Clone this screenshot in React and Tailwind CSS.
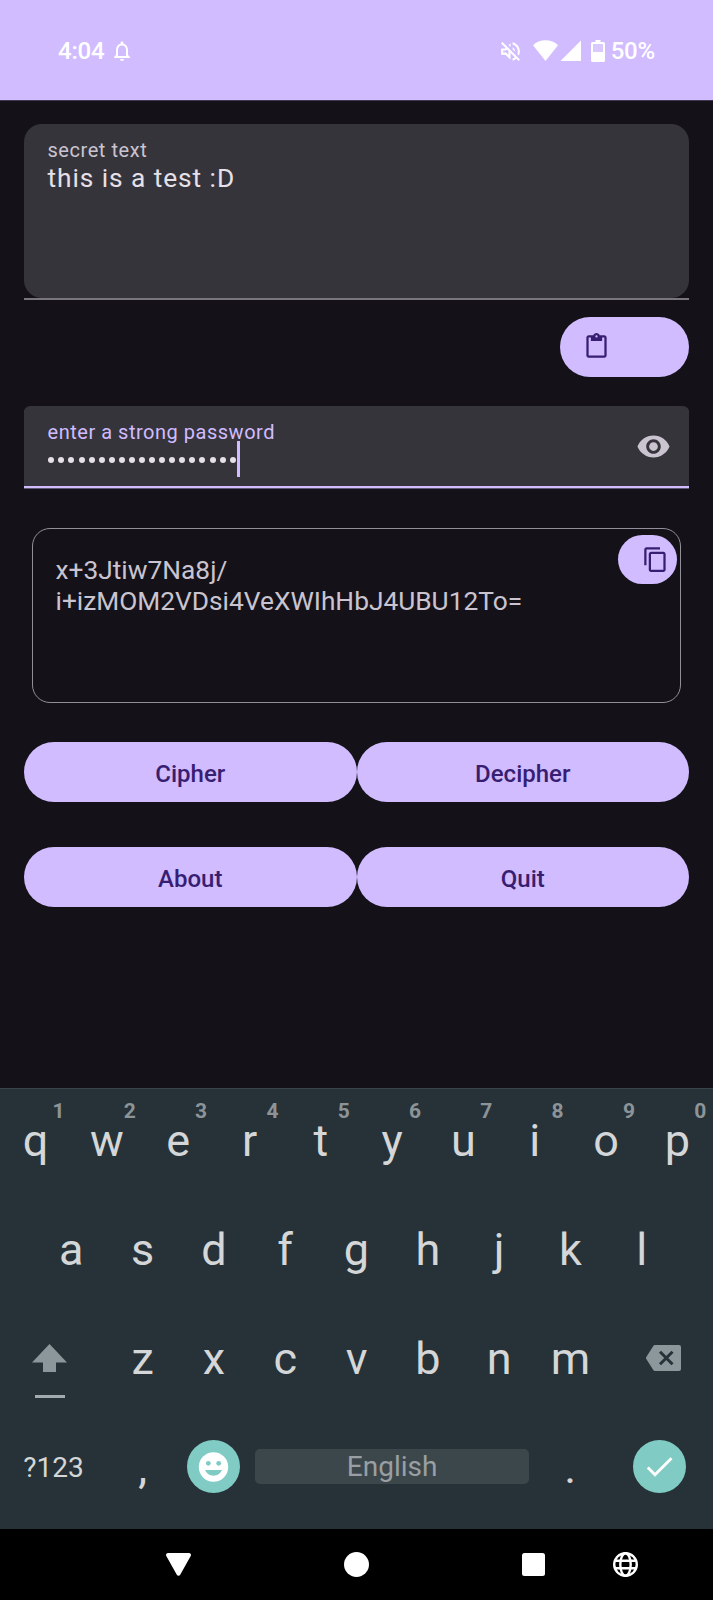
import React from "react";
import {
  MdNotificationsNone,
  MdOutlineVolumeOff,
  MdContentPaste,
  MdContentCopy,
  MdVisibility,
} from "react-icons/md";

function StatusBar() {
  return (
    <header className="flex h-[101px] items-center justify-between border-b border-[#40394f] bg-[#d0bcff] pt-[2px] pr-[58px] pl-[58px] text-white">
      <div className="flex items-center">
        <span className="text-[24px] leading-[28px] font-medium tracking-[-0.2px]">4:04</span>
        <MdNotificationsNone className="ml-[6px] size-[24px]" />
      </div>
      <div className="flex items-center">
        <MdOutlineVolumeOff className="mr-[10px] size-[25px]" />
        <svg className="mb-[1px] h-[22px] w-[48px]" viewBox="0 0 48 22" fill="currentColor">
          <path d="M0 5.2C3.2 2 7.500 .3 12.500 .3S21.800 2 25 5.200L12.500 21z" />
          <path d="M48 .5V21H27.500z" />
        </svg>
        <svg className="ml-[10px] h-[22px] w-[14px]" viewBox="0 0 14 22" fill="currentColor">
          <path d="M4.500 0h5v2H12.500a1.500 1.500 0 0 1 1.500 1.500v17a1.500 1.500 0 0 1-1.500 1.500H1.500A1.500 1.500 0 0 1 0 20.500v-17a1.500 1.500 0 0 1 1.500-1.500h3z" />
          <path d="M2 4h10v8H2z" fill="#dac9ff" />
        </svg>
        <span className="ml-[5.5px] text-[24px] leading-[28px] font-medium tracking-[-0.2px]">50%</span>
      </div>
    </header>
  );
}

function PillButton({ label }) {
  return (
    <button className="h-[60px] flex-1 rounded-full bg-[#d0bcff] pt-[4px] text-[24px] leading-[28px] font-medium text-[#381e72]">
      {label}
    </button>
  );
}

function Dots() {
  return (
    <div className="mt-[12.5px] ml-[0.8px] flex h-[6px] gap-[4.09px]">
      {Array.from({ length: 19 }, (_, i) => (
        <span key={i} className="size-[6px] rounded-full bg-[#e6e0e9]" />
      ))}
    </div>
  );
}

function Key({ children, hint }) {
  return (
    <div className="relative flex w-[71.3px] items-center justify-center text-[45px] leading-[53px] text-[#d4d6d7]">
      {children}
      {hint && (
        <span className="absolute top-[10px] left-[52.500px] text-[21px] leading-[24px] font-bold text-[#8d9498]">
          {hint}
        </span>
      )}
    </div>
  );
}

function Keyboard() {
  return (
    <section className="h-[441px] border-t border-[#37454a] bg-[#263238]">
      <div className="flex h-[106px] pb-[3px]">
        {"qwertyuiop".split("").map((c, i) => (
          <Key key={c} hint={String((i + 1) % 10)}>{c}</Key>
        ))}
      </div>
      <div className="flex h-[109px] justify-center">
        {"asdfghjkl".split("").map((c) => (
          <Key key={c}>{c}</Key>
        ))}
      </div>
      <div className="flex h-[109px]">
        <div className="flex w-[107px] flex-col items-center pt-[40px] pr-[7.5px]">
          <svg className="h-[28px] w-[35px]" viewBox="0 0 35 28" fill="#8c979c">
            <path d="M17.500 0L35 18.500H24V28H11V18.500H0z" />
          </svg>
          <span className="mt-[23px] h-[3px] w-[30px] bg-[#a3abae]" />
        </div>
        {"zxcvbnm".split("").map((c) => (
          <Key key={c}>{c}</Key>
        ))}
        <div className="pt-[41px] pl-[40px]">
          <svg className="h-[26px] w-[35px]" viewBox="0 0 35 26">
            <path d="M9 0H33a2 2 0 0 1 2 2V24a2 2 0 0 1-2 2H9a2 2 0 0 1-1.700-.9L.3 14a2 2 0 0 1 0-2L7.300 .9A2 2 0 0 1 9 0z" fill="#8c979c" />
            <path d="M14 6.700L26.500 19.200M26.500 6.700L14 19.200" stroke="#263238" strokeWidth="3" />
          </svg>
        </div>
      </div>
      <div className="flex h-[109px] items-center">
        <span className="w-[107px] text-center text-[28px] leading-[32px] text-[#d4d6d7]">?123</span>
        <Key>,</Key>
        <div className="flex w-[71.3px] justify-center pb-[2px]">
          <svg className="size-[53px]" viewBox="0 0 53 53">
            <circle cx="26.500" cy="26.500" r="26.500" fill="#80cbc4" />
            <circle cx="26.500" cy="27" r="14.700" fill="#fff" />
            <g fill="#80cbc4">
              <circle cx="21.300" cy="23.300" r="2.400" />
              <circle cx="31.700" cy="23.300" r="2.400" />
              <path d="M18 30H35A9.200 9.200 0 0 1 18 30z" />
            </g>
          </svg>
        </div>
        <div className="flex w-[285px] justify-center pb-[2px]">
          <div className="h-[35px] w-[274px] rounded-[5px] bg-[#3c474c] text-center text-[28px] leading-[35px] text-[#999fa2]">
            English
          </div>
        </div>
        <Key>.</Key>
        <div className="flex w-[107px] justify-center pb-[2px]">
          <svg className="size-[53px]" viewBox="0 0 53 53">
            <circle cx="26.500" cy="26.500" r="26.500" fill="#80cbc4" />
            <path d="M14.800 27.500L22 34.700L38.500 18.300" fill="none" stroke="#fff" strokeWidth="2.900" />
          </svg>
        </div>
      </div>
    </section>
  );
}

function NavBar() {
  return (
    <nav className="flex h-[71px] items-center bg-black pl-[89.500px] text-white">
      <div className="flex w-[178px] justify-center">
        <svg className="h-[23px] w-[25px]" viewBox="0 0 25 23" fill="currentColor">
          <path d="M2 0H23A2 2 0 0 1 24.700 3L14.200 21.800A2 2 0 0 1 10.800 21.800L.3 3A2 2 0 0 1 2 0z" />
        </svg>
      </div>
      <div className="flex w-[177px] justify-center">
        <span className="size-[25px] rounded-full bg-white" />
      </div>
      <div className="flex w-[178px] justify-center">
        <span className="size-[23px] rounded-[2.500px] bg-white" />
      </div>
      <svg className="-ml-[10px] size-[25px]" viewBox="0 0 25 25" fill="none" stroke="currentColor" strokeWidth="2.400">
        <circle cx="12.500" cy="12.500" r="11.300" />
        <ellipse cx="12.500" cy="12.500" rx="5.200" ry="11.300" />
        <path d="M2 8.700H23M2 16.300H23" />
      </svg>
    </nav>
  );
}

export default function App() {
  return (
    <div className="flex h-[1600px] w-[713px] flex-col overflow-hidden bg-[#141218] font-['Roboto',sans-serif]">
      <StatusBar />
      <main className="flex flex-1 flex-col px-[24px] pt-[23px]">
        <div className="h-[176px] border-b-2 border-[#79767d]">
          <div className="h-[174px] rounded-[18px] bg-[#36343b] px-[23.5px] pt-[14px]">
            <div className="text-[20px] leading-[24px] tracking-[0.55px] text-[#cac4d0]">secret text</div>
            <div className="text-[26.3px] leading-[32px] tracking-[0.93px] text-[#e6e0e9]">this is a test :D</div>
          </div>
        </div>
        <button className="mt-[17px] flex h-[60px] w-[129px] self-end rounded-full bg-[#d0bcff] pt-[16px] pl-[23px] text-[#381e72]">
          <MdContentPaste className="size-[27px]" />
        </button>
        <div className="mt-[29px] flex h-[82px] justify-between rounded-t-[6px] border-b-2 border-[#d0bcff] bg-[#36343b] pr-[18px] pl-[23.5px] shadow-[0_1px_0_#5e5672]">
          <div className="pt-[14px]">
            <div className="text-[20px] leading-[24px] tracking-[0.52px] text-[#d0bcff]">enter a strong password</div>
            <div className="flex">
              <Dots />
              <span className="-mt-[3px] ml-[1.6px] h-[36px] w-[2.5px] bg-[#d0bcff]" />
            </div>
          </div>
          <MdVisibility className="mt-[23px] size-[35px] text-[#cac4d0]" />
        </div>
        <div className="mx-[8px] mt-[40px] flex h-[175px] justify-between rounded-[18px] border border-[#938f99] pr-[3px] pl-[22.5px]">
          <div className="pt-[26px] text-[26.3px] leading-[31px] text-[#cac4d0]">
            x+3Jtiw7Na8j/
            <br />
            i+izMOM2VDsi4VeXWIhHbJ4UBU12To=
          </div>
          <button className="mt-[6px] flex h-[49px] w-[59px] shrink-0 rounded-full bg-[#d0bcff] pt-[11px] pl-[24px] text-[#381e72]">
            <MdContentCopy className="size-[27px] shrink-0" />
          </button>
        </div>
        <div className="mt-[39px] flex">
          <PillButton label="Cipher" />
          <PillButton label="Decipher" />
        </div>
        <div className="mt-[45px] flex">
          <PillButton label="About" />
          <PillButton label="Quit" />
        </div>
      </main>
      <Keyboard />
      <NavBar />
    </div>
  );
}
